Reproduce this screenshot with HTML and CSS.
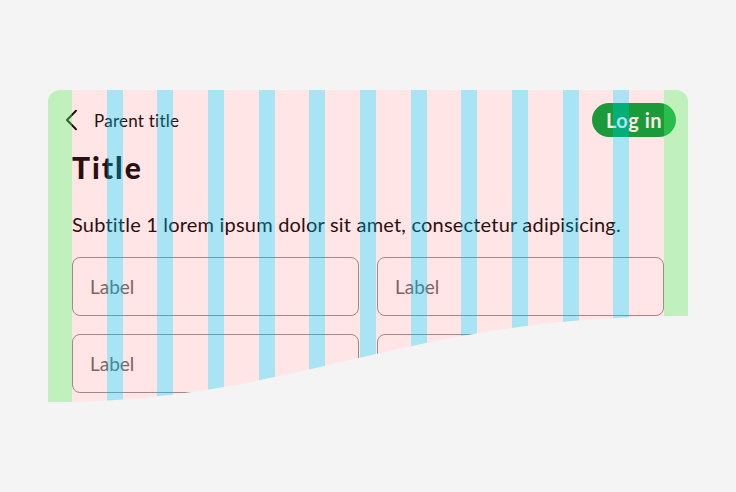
FILE: index.html
```html
<!DOCTYPE html>
<html>
<head>
  <meta charset="UTF-8">
  <title>Grid</title>
  <link rel="stylesheet" href="styles.css">
</head>
<body>
  <div class="card">
    <div class="topbar">
      <button class="back" aria-label="Back">
        <svg width="24" height="24" viewBox="0 0 24 24"><path d="M16 2.8 L7 12 L16 21.2" fill="none" stroke="#111" stroke-width="2" stroke-linecap="round" stroke-linejoin="round"/></svg>
      </button>
      <span class="parent">Parent title</span>
      <button class="login">Log in</button>
    </div>
    <div class="content">
      <h1 class="title">Title</h1>
      <p class="subtitle">Subtitle 1 lorem ipsum dolor sit amet, consectetur adipisicing.</p>
      <div class="fields">
        <div class="field">Label</div>
        <div class="field">Label</div>
        <div class="field">Label</div>
        <div class="field">Label</div>
      </div>
    </div>
    <!-- layout grid overlay -->
    <div class="grid-overlay">
      <span class="col"></span><span class="col"></span><span class="col"></span>
      <span class="col"></span><span class="col"></span><span class="col"></span>
      <span class="col"></span><span class="col"></span><span class="col"></span>
      <span class="col"></span><span class="col"></span><span class="col"></span>
    </div>
  </div>
</body>
</html>
```

FILE: styles.css
```css
body {
  margin: 0;
  padding: 0;
  background-color: #f4f4f4;
  font-family: Lato, "Noto Sans", sans-serif;
  color: #111;
}

.card {
  position: relative;
  width: 640px;
  height: 312px;
  margin: 90px 48px 0;
  background-color: #fff;
  border-radius: 12px 12px 0 0;
  overflow: hidden;
  clip-path: path("M0 0 H640 V226 C352 226 252 312 0 312 Z");
}

.topbar {
  display: flex;
  align-items: center;
  height: 60px;
  padding: 0 12px;
}

.back {
  width: 24px;
  height: 24px;
  padding: 0;
  margin-right: 10px;
  border: none;
  background: none;
}

.back svg {
  display: block;
}

.parent {
  font-size: 17px;
  letter-spacing: 0.25px;
}

.login {
  margin-left: auto;
  height: 34px;
  padding: 0 14px;
  border: none;
  border-radius: 17px;
  background-color: #02ac40;
  color: #fff;
  font-family: inherit;
  font-size: 20px;
  font-weight: 700;
  letter-spacing: 0.5px;
}

.content {
  padding: 0 24px;
}

.title {
  margin: 0;
  font-size: 30px;
  line-height: 34px;
  font-weight: 900;
  letter-spacing: 2px;
}

.subtitle {
  margin: 28px 0 0;
  font-size: 20px;
  line-height: 24px;
  letter-spacing: 0.2px;
}

.fields {
  display: grid;
  grid-template-columns: 1fr 1fr;
  gap: 18px 18px;
  margin-top: 21px;
}

.field {
  display: flex;
  align-items: center;
  height: 59px;
  box-sizing: border-box;
  padding: 0 17px;
  border: 1px solid #999;
  border-radius: 8px;
  color: #6f6f6f;
  font-size: 19px;
}

.grid-overlay {
  position: absolute;
  top: 0;
  left: 0;
  right: 0;
  bottom: 0;
  display: flex;
  border-left: 24px solid rgba(97, 217, 87, 0.4);
  border-right: 24px solid rgba(97, 217, 87, 0.4);
  pointer-events: none;
}

.grid-overlay .col {
  flex: 1 1 0;
  background-color: rgba(255, 0, 0, 0.1);
  background-clip: padding-box;
}

.grid-overlay .col + .col {
  border-left: 16px solid rgba(6, 178, 224, 0.35);
}
```
